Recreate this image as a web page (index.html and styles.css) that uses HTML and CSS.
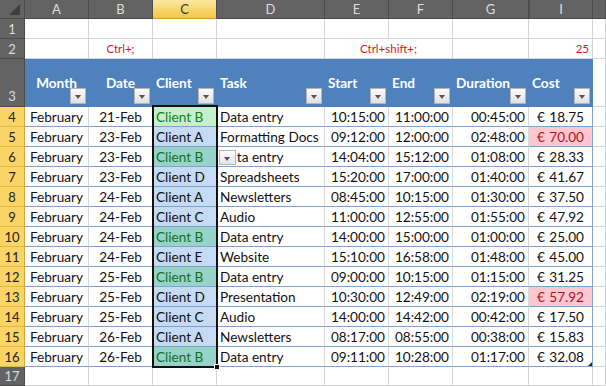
FILE: index.html
```html
<!DOCTYPE html>
<html>
<head>
<meta charset="utf-8">
<link rel="stylesheet" href="styles.css">
</head>
<body>
<div class="sheet">
  <!-- column headers -->
  <div class="ch corner"><span class="tri"></span></div>
  <div class="ch">A</div><div class="ch">B</div><div class="ch sel">C</div><div class="ch">D</div><div class="ch">E</div><div class="ch">F</div><div class="ch">G</div><div class="ch hid">I</div><div class="ch"></div>

  <!-- row 1 -->
  <div class="rh">1</div>
  <div class="c"></div><div class="c"></div><div class="c"></div><div class="c"></div><div class="c"></div><div class="c"></div><div class="c"></div><div class="c"></div><div class="c"></div>

  <!-- row 2 -->
  <div class="rh">2</div>
  <div class="c"></div><div class="c note ctr">Ctrl+;</div><div class="c"></div><div class="c"></div>
  <div class="c note span2 ctr">Ctrl+shift+;</div>
  <div class="c"></div><div class="c note r">25</div><div class="c"></div>

  <!-- row 3 : table header -->
  <div class="rh rh3">3</div>
  <div class="th ctr">Month<span class="dd"></span></div>
  <div class="th ctr">Date<span class="dd"></span></div>
  <div class="th">Client<span class="dd"></span></div>
  <div class="th">Task<span class="dd"></span></div>
  <div class="th">Start<span class="dd"></span></div>
  <div class="th">End<span class="dd"></span></div>
  <div class="th">Duration<span class="dd"></span></div>
  <div class="th last">Cost<span class="dd"></span></div>
  <div class="c"></div>

  <!-- data rows -->
  <div class="rh sel">4</div><div class="td ctr">February</div><div class="td ctr">21-Feb</div><div class="td cli green">Client B</div><div class="td">Data entry</div><div class="td r">10:15:00</div><div class="td r">11:00:00</div><div class="td r">00:45:00</div><div class="td cost last"><span>€</span><span>18.75</span></div><div class="c"></div>

  <div class="rh sel">5</div><div class="td ctr">February</div><div class="td ctr">23-Feb</div><div class="td cli">Client A</div><div class="td">Formatting Docs</div><div class="td r">09:12:00</div><div class="td r">12:00:00</div><div class="td r">02:48:00</div><div class="td cost neg last"><span>€</span><span>70.00</span></div><div class="c"></div>

  <div class="rh sel">6</div><div class="td ctr">February</div><div class="td ctr">23-Feb</div><div class="td cli teal">Client B</div><div class="td ddcell">Data entry<span class="dv"></span></div><div class="td r">14:04:00</div><div class="td r">15:12:00</div><div class="td r">01:08:00</div><div class="td cost last"><span>€</span><span>28.33</span></div><div class="c"></div>

  <div class="rh sel">7</div><div class="td ctr">February</div><div class="td ctr">23-Feb</div><div class="td cli">Client D</div><div class="td">Spreadsheets</div><div class="td r">15:20:00</div><div class="td r">17:00:00</div><div class="td r">01:40:00</div><div class="td cost last"><span>€</span><span>41.67</span></div><div class="c"></div>

  <div class="rh sel">8</div><div class="td ctr">February</div><div class="td ctr">24-Feb</div><div class="td cli">Client A</div><div class="td">Newsletters</div><div class="td r">08:45:00</div><div class="td r">10:15:00</div><div class="td r">01:30:00</div><div class="td cost last"><span>€</span><span>37.50</span></div><div class="c"></div>

  <div class="rh sel">9</div><div class="td ctr">February</div><div class="td ctr">24-Feb</div><div class="td cli">Client C</div><div class="td">Audio</div><div class="td r">11:00:00</div><div class="td r">12:55:00</div><div class="td r">01:55:00</div><div class="td cost last"><span>€</span><span>47.92</span></div><div class="c"></div>

  <div class="rh sel">10</div><div class="td ctr">February</div><div class="td ctr">24-Feb</div><div class="td cli teal">Client B</div><div class="td">Data entry</div><div class="td r">14:00:00</div><div class="td r">15:00:00</div><div class="td r">01:00:00</div><div class="td cost last"><span>€</span><span>25.00</span></div><div class="c"></div>

  <div class="rh sel">11</div><div class="td ctr">February</div><div class="td ctr">24-Feb</div><div class="td cli">Client E</div><div class="td">Website</div><div class="td r">15:10:00</div><div class="td r">16:58:00</div><div class="td r">01:48:00</div><div class="td cost last"><span>€</span><span>45.00</span></div><div class="c"></div>

  <div class="rh sel">12</div><div class="td ctr">February</div><div class="td ctr">25-Feb</div><div class="td cli teal">Client B</div><div class="td">Data entry</div><div class="td r">09:00:00</div><div class="td r">10:15:00</div><div class="td r">01:15:00</div><div class="td cost last"><span>€</span><span>31.25</span></div><div class="c"></div>

  <div class="rh sel">13</div><div class="td ctr">February</div><div class="td ctr">25-Feb</div><div class="td cli">Client D</div><div class="td">Presentation</div><div class="td r">10:30:00</div><div class="td r">12:49:00</div><div class="td r">02:19:00</div><div class="td cost neg last"><span>€</span><span>57.92</span></div><div class="c"></div>

  <div class="rh sel">14</div><div class="td ctr">February</div><div class="td ctr">25-Feb</div><div class="td cli">Client C</div><div class="td">Audio</div><div class="td r">14:00:00</div><div class="td r">14:42:00</div><div class="td r">00:42:00</div><div class="td cost last"><span>€</span><span>17.50</span></div><div class="c"></div>

  <div class="rh sel">15</div><div class="td ctr">February</div><div class="td ctr">26-Feb</div><div class="td cli">Client A</div><div class="td">Newsletters</div><div class="td r">08:17:00</div><div class="td r">08:55:00</div><div class="td r">00:38:00</div><div class="td cost last"><span>€</span><span>15.83</span></div><div class="c"></div>

  <div class="rh sel">16</div><div class="td ctr">February</div><div class="td ctr">26-Feb</div><div class="td cli teal">Client B</div><div class="td">Data entry</div><div class="td r">09:11:00</div><div class="td r">10:28:00</div><div class="td r">01:17:00</div><div class="td cost last endcell"><span>€</span><span>32.08</span><span class="rsz"></span></div><div class="c"></div>

  <!-- row 17 -->
  <div class="rh">17</div>
  <div class="c"></div><div class="c"></div><div class="c"></div><div class="c"></div><div class="c"></div><div class="c"></div><div class="c"></div><div class="c"></div><div class="c"></div>

  <div class="selbox"><span class="handle"></span></div>
</div>
</body>
</html>
```
FILE: styles.css
```css
* { box-sizing: border-box; }
html, body { margin: 0; padding: 0; background: #fff; }
body { font-family: Lato, "Open Sans", sans-serif; }

.sheet {
  position: relative;
  width: 606px;
  height: 386px;
  overflow: hidden;
  display: grid;
  grid-template-columns: 25px 64px 64px 64px 108px 64px 64px 76px 64px 13px;
  grid-template-rows: 19px 20px 20px 48px repeat(13, 20px) 19px;
  font-size: 13.6px;
  color: #111;
}

.sheet > div {
  border-right: 1px solid #d4d4d4;
  border-bottom: 1px solid #d4d4d4;
  white-space: nowrap;
  overflow: visible;
  display: flex;
  align-items: center;
  padding: 0 3px;
  min-width: 0;
}

/* column headers */
.sheet > .ch {
  background: #636363;
  color: #dcdcdc;
  font-size: 13px;
  justify-content: center;
  border-right: 1px solid #4d4d4d;
  border-bottom: 1px solid #4a4a4a;
}
.sheet > .ch.sel {
  background: linear-gradient(#fbe7a0, #f7d468 60%, #f4c74a);
  color: #333;
  border-bottom: 1px solid #d69b2a;
}
.sheet > .ch.hid { border-left: 1px solid #4d4d4d; }
.corner { position: relative; }
.tri {
  position: absolute;
  right: 4px;
  bottom: 3px;
  width: 0;
  height: 0;
  border-left: 11px solid transparent;
  border-bottom: 11px solid #3e3e3e;
}

/* row headers */
.sheet > .rh {
  background: #636363;
  color: #dcdcdc;
  font-size: 13px;
  justify-content: center;
  padding: 0;
  border-right: 1px solid #4a4a4a;
  border-bottom: 1px solid #4d4d4d;
}
.sheet > .rh3 { align-items: flex-end; padding-bottom: 2px; }
.sheet > .rh.sel {
  background: #f8d564;
  color: #222;
  border-bottom: 1px solid #e3b949;
  border-right: 1px solid #d8a63a;
}

/* notes in row 2 */
.note { color: #e0141e; font-size: 11.5px; }
.span2 { grid-column: span 2; }
.ctr { justify-content: center; }
.r { justify-content: flex-end; }

/* table header */
.sheet > .th {
  background: #4f81bd;
  color: #fff;
  font-weight: bold;
  border-right: 1px solid #4f81bd;
  border-bottom: 1px solid #4f81bd;
  align-items: flex-start;
  padding-top: 16px;
  position: relative;
}
.sheet > .th.ctr { justify-content: center; }
.dd {
  position: absolute;
  right: 2px;
  bottom: 2px;
  width: 16px;
  height: 16px;
  background: linear-gradient(#fbfbfb, #e2e2e2);
  border: 1px solid #b4b4b4;
}
.dd::after, .dv::after {
  content: "";
  position: absolute;
  left: 4px;
  top: 6px;
  border-left: 3.5px solid transparent;
  border-right: 3.5px solid transparent;
  border-top: 4px solid #555;
}

/* table data */
.sheet > .td {
  background: #fff;
  border-bottom: 1px solid #7ea1cd;
  border-right: 1px solid #d8d8d8;
}
.sheet > .td.last { border-right: 1px solid #7ea1cd; }
.sheet > .cli { background: #c4dbf3; }
.sheet > .cli.green { background: #c6efce; color: #138013; }
.sheet > .cli.teal { background: #97d2cb; color: #137020; }
.sheet > .cost { justify-content: space-between; padding: 0 8px 0 8px; }
.sheet > .cost.neg { background: #ffc7ce; color: #b0101c; }
.ddcell { position: relative; }
.dv {
  position: absolute;
  left: 2px;
  top: 3px;
  width: 17px;
  height: 15px;
  background: linear-gradient(#fdfdfd, #e6e6e6);
  border: 1px solid #b8b8b8;
  box-shadow: 0 0 0 1px #fff;
}
.endcell { position: relative; }
.rsz {
  position: absolute;
  right: 0;
  bottom: 0;
  width: 0;
  height: 0;
  border-left: 4px solid transparent;
  border-bottom: 4px solid #2a2a2a;
}

/* selection */
.sheet > .selbox {
  position: absolute;
  left: 152px;
  top: 105px;
  width: 66px;
  height: 263px;
  border: 2px solid #111;
  padding: 0;
  pointer-events: none;
}
.handle {
  position: absolute;
  right: -4px;
  bottom: -4px;
  width: 6px;
  height: 6px;
  background: #111;
  border: 1px solid #fff;
}
```
